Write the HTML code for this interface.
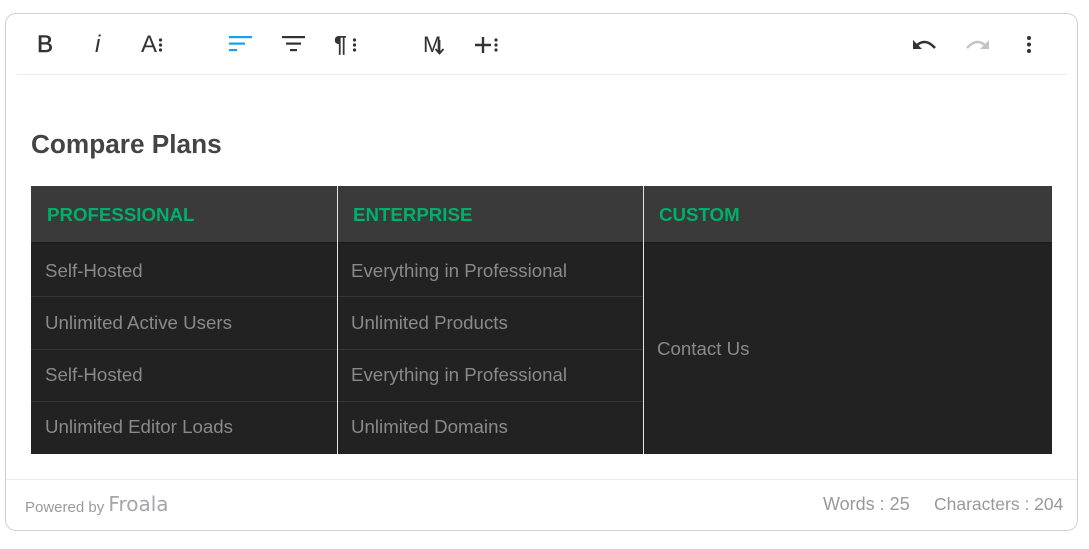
<!DOCTYPE html>
<html><head><meta charset="utf-8"><style>
*{margin:0;padding:0;box-sizing:border-box}
body{width:1089px;height:549px;background:#fff;font-family:"Liberation Sans",Arial,sans-serif;position:relative;overflow:hidden}
.box{position:absolute;left:5px;top:13px;width:1073px;height:518px;border:1px solid #cfcfcf;border-radius:11px}
.a{position:absolute}
.sep{position:absolute;height:1px;background:#ececec}
.tb{position:absolute;left:31px;top:186px;width:1021px;height:268px;background:#222}
.hd{position:absolute;left:0;top:0;width:1021px;height:57px;background:#3a3a3a;border-bottom:1px solid #1a1a1a}
.h{position:absolute;top:18px;color:#00b06a;font-weight:bold;font-size:18.7px}
.c{position:absolute;color:#8a8a8a;font-size:18.7px}
.vl{position:absolute;top:0;width:1px;height:268px;background:#e4e4e4}
.hl{position:absolute;height:1px;background:#353535}
</style></head><body>
<div class="box"></div>
<div class="sep" style="left:17px;top:74px;width:1050px"></div>
<div class="sep" style="left:6px;top:479px;width:1071px"></div>

<svg class="a" style="left:0;top:0" width="520" height="70" font-family="Liberation Sans, Arial, sans-serif" fill="#333">
 <text x="37" y="52" font-size="24" stroke="#333" stroke-width="0.5">B</text>
 <text x="95" y="52" font-size="24" font-style="italic">i</text>
 <text x="141" y="52" font-size="24">A</text>
 <circle cx="160.5" cy="40" r="1.6"/><circle cx="160.5" cy="45" r="1.6"/><circle cx="160.5" cy="50" r="1.6"/>
 <rect x="229" y="36" width="23" height="2.2" fill="#1e9cf0"/><rect x="229" y="42.5" width="16" height="2.2" fill="#1e9cf0"/><rect x="229" y="49" width="8" height="2.2" fill="#1e9cf0"/>
 <rect x="282" y="36" width="23" height="2.2"/><rect x="286" y="42.5" width="15" height="2.2"/><rect x="290" y="49" width="7" height="2.2"/>
 <text x="334" y="52" font-size="23" font-weight="bold">¶</text>
 <circle cx="354.5" cy="40" r="1.6"/><circle cx="354.5" cy="45" r="1.6"/><circle cx="354.5" cy="50" r="1.6"/>
 <text x="423" y="52" font-size="22">M</text>
 <path d="M439.5 40 V53 M435.5 49 L439.5 53.5 L443.5 49" stroke="#333" stroke-width="1.8" fill="none"/>
 <path d="M475 45 H491 M483 37 V53" stroke="#333" stroke-width="2.4"/>
 <circle cx="496" cy="40" r="1.6"/><circle cx="496" cy="45" r="1.6"/><circle cx="496" cy="50" r="1.6"/>
</svg>

<svg class="a" style="left:912px;top:36px" width="26" height="16"><path d="M4 10 Q13 1 23 12" stroke="#333" stroke-width="2.5" fill="none"/><path d="M1 4 L1 13 L10 13 Z" fill="#333"/></svg>
<svg class="a" style="left:964px;top:36px" width="26" height="16"><path d="M22 10 Q13 1 3 12" stroke="#c4c4c4" stroke-width="2.5" fill="none"/><path d="M25 4 L25 13 L16 13 Z" fill="#c4c4c4"/></svg>
<svg class="a" style="left:1026px;top:35px" width="6" height="20"><circle cx="3" cy="3" r="2" fill="#333"/><circle cx="3" cy="9.5" r="2" fill="#333"/><circle cx="3" cy="16" r="2" fill="#333"/></svg>

<div class="a" style="left:31px;top:129px;font-size:26.2px;font-weight:bold;color:#444">Compare Plans</div>

<div class="tb">
 <div class="hd"></div>
 <div class="h" style="left:16px">PROFESSIONAL</div>
 <div class="h" style="left:322px">ENTERPRISE</div>
 <div class="h" style="left:628px">CUSTOM</div>
 <div class="hl" style="left:0;top:110px;width:612px"></div>
 <div class="hl" style="left:0;top:163px;width:612px"></div>
 <div class="hl" style="left:0;top:215px;width:612px"></div>
 <div class="vl" style="left:306px"></div>
 <div class="vl" style="left:612px"></div>
 <div class="c" style="left:14px;top:74px">Self-Hosted</div>
 <div class="c" style="left:14px;top:126px">Unlimited Active Users</div>
 <div class="c" style="left:14px;top:178px">Self-Hosted</div>
 <div class="c" style="left:14px;top:230px">Unlimited Editor Loads</div>
 <div class="c" style="left:320px;top:74px">Everything in Professional</div>
 <div class="c" style="left:320px;top:126px">Unlimited Products</div>
 <div class="c" style="left:320px;top:178px">Everything in Professional</div>
 <div class="c" style="left:320px;top:230px">Unlimited Domains</div>
 <div class="c" style="left:626px;top:152px">Contact Us</div>
</div>

<div class="a" style="left:25px;top:493px;font-size:15px;color:#9a9a9a">Powered by <span style="font-size:20px;color:#a5a5aa;font-family:'DejaVu Sans',sans-serif;position:relative;top:-1px">Froala</span></div>
<div class="a" style="left:823px;top:494px;font-size:18px;color:#999">Words : 25</div>
<div class="a" style="left:934px;top:494px;font-size:17.5px;color:#999">Characters : 204</div>
</body></html>
